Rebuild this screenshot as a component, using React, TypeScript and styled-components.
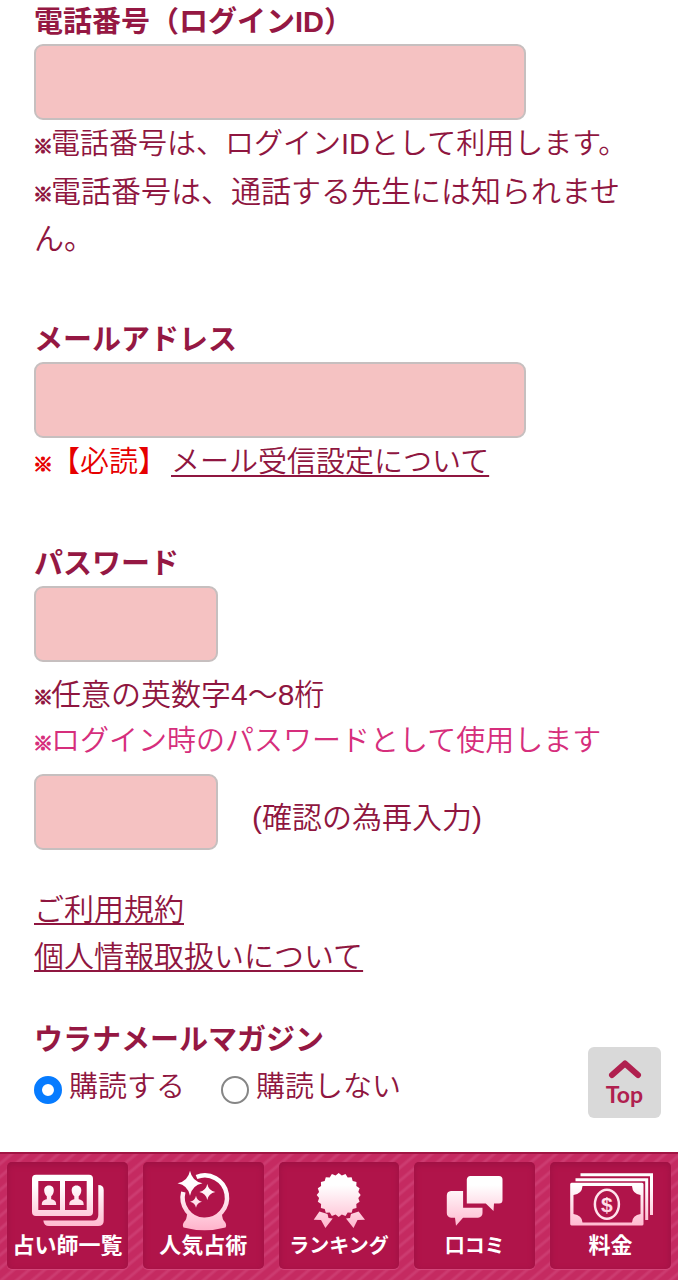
import React from "react";
import styled, { createGlobalStyle } from "styled-components";

const GlobalStyle = createGlobalStyle`
  *, *::before, *::after { box-sizing: border-box; }
  body {
    margin: 0;
    background: #fff;
    color: #8f1640;
    font-family: "Liberation Sans", "Noto Sans CJK JP", sans-serif;
    font-size: 30px;
    font-weight: 350;
    line-height: 47px;
  }
`;

const Page = styled.div`
  display: flex;
  flex-direction: column;
  min-height: 100vh;
`;

const Form = styled.form`
  flex: 1;
  padding: 0 34px 36px;
`;

const Section = styled.section<{ $gap?: number }>`
  margin-bottom: ${(p) => p.$gap ?? 56}px;
`;

const Heading = styled.label`
  display: block;
  padding: 0;
  font-size: 29px;
  font-weight: 700;
  line-height: 44px;
  color: #951843;
`;

const Field = styled.input<{ $short?: boolean }>`
  display: block;
  width: ${(p) => (p.$short ? "184px" : "492px")};
  max-width: 100%;
  height: 76px;
  padding: 0 16px;
  border: 2px solid #c6bfbf;
  border-radius: 9px;
  background: #f5c2c2;
  color: inherit;
  font: inherit;
`;

const Notes = styled.div<{ $spaced?: boolean }>`
  padding: ${(p) => (p.$spaced ? "9px 0" : "1px 0 0")};
`;

const Note = styled.p<{ $compact?: boolean; $color?: string }>`
  margin: 0;
  font-size: ${(p) => (p.$compact ? 29 : 30)}px;
  color: ${(p) => p.$color ?? "inherit"};
`;

const Mark = styled.span`
  margin: 0 -2px 0 -1px;
  font-size: 20px;
  font-weight: 700;
  line-height: 20px;
  -webkit-text-stroke: 1px currentColor;
`;

const ConfirmRow = styled.div`
  display: flex;
  align-items: center;
  gap: 34px;
`;

const ConfirmLabel = styled.label`
  padding-top: 10px;
`;

const TextLink = styled.a`
  color: #8f1640;
  text-decoration: underline;
  text-decoration-thickness: 2px;
  text-underline-offset: 3px;

  ${Note} & {
    margin-left: 4px;
  }
`;

const Links = styled.nav`
  display: flex;
  flex-direction: column;
  align-items: flex-start;
  margin: 36px 0 38px;
`;

const Choices = styled.fieldset`
  margin: 0;
  padding: 0;
  border: 0;
`;

const ChoiceRow = styled.div`
  display: flex;
  gap: 36px;
  padding-top: 2px;
`;

const Choice = styled.label`
  display: flex;
  align-items: center;
  gap: 7px;
  font-size: 29px;
`;

const Radio = styled.input`
  appearance: none;
  width: 28px;
  height: 28px;
  margin: 4px 0 0;
  border: 2px solid #868686;
  border-radius: 50%;
  background: #fff;
  &:checked {
    border: 8px solid #067bff;
  }
`;

const TopButton = styled.button`
  position: fixed;
  right: 17px;
  bottom: 162px;
  display: flex;
  flex-direction: column;
  align-items: center;
  width: 73px;
  height: 71px;
  padding: 12px 0 0;
  border: 0;
  border-radius: 6px;
  background: #d9d9d9;
  color: #b0204f;
  font-family: Lato, sans-serif;
  font-size: 23px;
  font-weight: 700;
  line-height: 30px;
`;

const BottomNav = styled.nav`
  display: grid;
  grid-template-columns: repeat(5, 1fr);
  gap: 15px;
  padding: 8px 7px 11px;
  border-top: 2px solid #a11443;
  background: repeating-linear-gradient(140deg, #c52a61 0 5px, #cc3b70 7px 8px, #c52a61 10px);
`;

const Tile = styled.a`
  display: flex;
  flex-direction: column;
  align-items: center;
  height: 107px;
  border-radius: 5px;
  background: #b0144a;
  box-shadow: inset 0 2px 6px #9a1142, 0 1px 1px #d5497c;
  color: #fff;
  text-decoration: none;
`;

const TileLabel = styled.span<{ $small?: boolean }>`
  font-size: ${(p) => (p.$small ? 20 : 22)}px;
  font-weight: 700;
  line-height: 24px;
  white-space: nowrap;
`;

const SharedDefs = styled.svg`
  position: absolute;
  width: 0;
  height: 0;
`;

const TileIcon = ({ children }: { children: React.ReactNode }) => (
  <svg width="120" height="72" viewBox="0 0 120 72" fill="url(#sheen)" aria-hidden="true">
    {children}
  </svg>
);

const star = (x: number, y: number, r: number) => {
  const k = r * 0.16;
  return `M${x} ${y - r}Q${x + k} ${y - k} ${x + r} ${y}Q${x + k} ${y + k} ${x} ${y + r}Q${x - k} ${y + k} ${x - r} ${y}Q${x - k} ${y - k} ${x} ${y - r}Z`;
};

const rosette = Array.from({ length: 40 }, (_, i) => {
  const a = (i * Math.PI) / 20 - Math.PI / 2;
  const r = i % 2 ? 19.8 : 22;
  return `${(59.7 + r * Math.cos(a)).toFixed(1)},${(33 + r * Math.sin(a)).toFixed(1)}`;
}).join(" ");

const person = (x: number) =>
  `M${x} 23.5c-3.4 0-5 2.3-4.8 5.3.2 2.6 1.2 4.2 2.6 5.4v3c-3.5 1-5 1.6-5 5.8h14.4c0-4.2-1.5-4.8-5-5.8v-3c1.4-1.2 2.4-2.8 2.6-5.4.2-3-1.4-5.3-4.8-5.3Z`;

const items = [
  {
    label: "占い師一覧",
    icon: (
      <>
        <path
          fillRule="evenodd"
          d="M29 12.7H82a4 4 0 0 1 4 4V50a4 4 0 0 1-4 4H29a4 4 0 0 1-4-4V16.7a4 4 0 0 1 4-4ZM31.3 19V48H53V19ZM58 19V48H79.7V19Z"
        />
        <path d={person(42)} />
        <path d={person(69.5)} />
        <path d="M91.3 23Q96.7 23 96.7 28V59Q96.7 64 91 64H42Q37 64 36.3 58.5H86Q91.3 58.5 91.3 53Z" />
      </>
    ),
  },
  {
    label: "人気占術",
    icon: (
      <>
        <path d="M53.5 15A22.2 22.2 0 1 1 40.3 30" fill="none" stroke="url(#sheen)" strokeWidth="4.5" />
        <path d="M44 52Q61.5 64 79 52Q79 57 82 60Q84 63 82.5 65.5Q61.5 71 40.5 65.5Q39 63 41 60Q44 57 44 52Z" />
        <path d={star(47, 21.3, 12.5)} stroke="#b0144a" strokeWidth="2" paintOrder="stroke" />
        <path d={star(64.3, 30, 8)} />
        <path d={star(53, 39.7, 6)} />
      </>
    ),
  },
  {
    label: "ランキング",
    small: true,
    icon: (
      <>
        <polygon points={rosette} />
        <path d="M40.4 49.5L34.7 57.7 42 58 46.4 66 53.7 56.5 49.5 56 48.5 52Z" />
        <path d="M79.6 49.5L86 57.7 78.5 58 74.5 66 67 56.5 71 56 72 52Z" />
      </>
    ),
  },
  {
    label: "口コミ",
    small: true,
    icon: (
      <>
        <path d="M55.5 14H84a3.5 3.5 0 0 1 3.5 3.5V38a3.5 3.5 0 0 1-3.5 3.5H79L78.5 49 70.8 41.5H51.8V17.5A3.5 3.5 0 0 1 55.5 14Z" />
        <path d="M36 29H48.1V45.7H67.5V51a4.5 4.5 0 0 1-4.5 4.7H48L41 63.7 40 55.7H36A4.5 4.5 0 0 1 31.8 51V33.5A4.5 4.5 0 0 1 36 29Z" />
      </>
    ),
  },
  {
    label: "料金",
    icon: (
      <>
        <path d="M29.5 11.3H102V53H99V14.3H29.5Z" />
        <path d="M24.5 16.2H97.2V58H94.2V19.2H24.5Z" />
        <path
          fillRule="evenodd"
          d="M20.5 20.7H91a1.5 1.5 0 0 1 1.5 1.5V62a1.5 1.5 0 0 1-1.5 1.5H20.5A1.5 1.5 0 0 1 19.2 62V22A1.5 1.5 0 0 1 20.5 20.7ZM31.5 24Q31 32 22.5 33V52Q31 53 31.5 60.5H81Q81.5 53 89.5 52V33Q81.5 32 81 24Z"
        />
        <ellipse cx="55.9" cy="42.3" rx="12" ry="14.5" fill="none" stroke="#ffe3ec" strokeWidth="2.5" />
        <text x="55.9" y="50" textAnchor="middle" fontFamily="Liberation Sans, sans-serif" fontSize="21" fontWeight="700">
          $
        </text>
      </>
    ),
  },
];

export default function App() {
  return (
    <Page>
      <GlobalStyle />
      <Form>
        <Section>
          <Heading htmlFor="tel">電話番号（ログインID）</Heading>
          <Field id="tel" type="tel" />
          <Notes>
            <Note $compact>
              <Mark>※</Mark>電話番号は、ログインIDとして利用します。
            </Note>
            <Note>
              <Mark>※</Mark>電話番号は、通話する先生には知られません。
            </Note>
          </Notes>
        </Section>

        <Section>
          <Heading htmlFor="mail">メールアドレス</Heading>
          <Field id="mail" type="email" />
          <Notes>
            <Note $compact $color="#e60000">
              <Mark>※</Mark>【必読】<TextLink href="#mail-settings">メール受信設定について</TextLink>
            </Note>
          </Notes>
        </Section>

        <Section $gap={36}>
          <Heading htmlFor="password">パスワード</Heading>
          <Field id="password" type="password" $short />
          <Notes $spaced>
            <Note>
              <Mark>※</Mark>任意の英数字4〜8桁
            </Note>
            <Note $compact $color="#d62e7c">
              <Mark>※</Mark>ログイン時のパスワードとして使用します
            </Note>
          </Notes>
          <ConfirmRow>
            <Field id="confirm" type="password" $short />
            <ConfirmLabel htmlFor="confirm">(確認の為再入力)</ConfirmLabel>
          </ConfirmRow>
        </Section>

        <Links>
          <TextLink href="#terms">ご利用規約</TextLink>
          <TextLink href="#privacy">個人情報取扱いについて</TextLink>
        </Links>

        <Choices>
          <Heading as="legend">ウラナメールマガジン</Heading>
          <ChoiceRow>
            <Choice>
              <Radio type="radio" name="magazine" defaultChecked />
              購読する
            </Choice>
            <Choice>
              <Radio type="radio" name="magazine" />
              購読しない
            </Choice>
          </ChoiceRow>
        </Choices>
      </Form>

      <TopButton type="button" onClick={() => window.scrollTo(0, 0)}>
        <svg width="34" height="20" viewBox="0 0 34 20" fill="none" stroke="#b0204f" strokeWidth="6" aria-hidden="true">
          <path d="M4 16L17 4.5L30 16" strokeLinecap="round" strokeLinejoin="round" />
        </svg>
        Top
      </TopButton>

      <SharedDefs aria-hidden="true">
        <defs>
          <linearGradient id="sheen" gradientUnits="userSpaceOnUse" x1="0" y1="12" x2="0" y2="68">
            <stop offset="0.2" stopColor="#fff" />
            <stop offset="1" stopColor="#ffb3cb" />
          </linearGradient>
        </defs>
      </SharedDefs>

      <BottomNav>
        {items.map((item) => (
          <Tile key={item.label} href="#">
            <TileIcon>{item.icon}</TileIcon>
            <TileLabel $small={item.small}>{item.label}</TileLabel>
          </Tile>
        ))}
      </BottomNav>
    </Page>
  );
}
